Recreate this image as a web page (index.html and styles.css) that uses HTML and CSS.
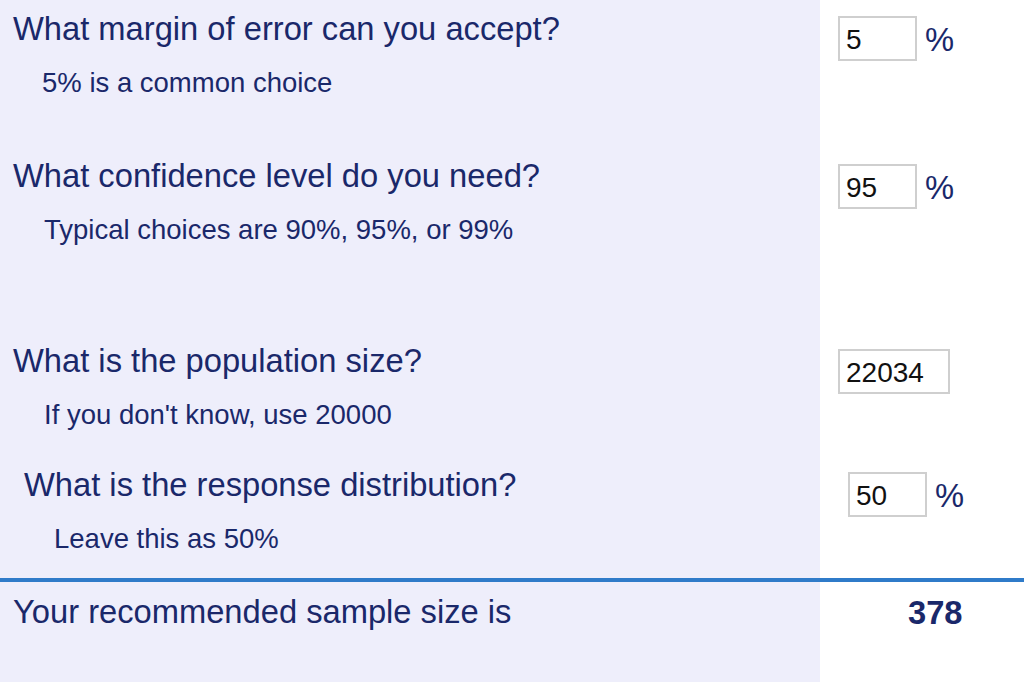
FILE: index.html
```html
<!DOCTYPE html>
<html lang="en">
<head>
    <meta charset="UTF-8">
    <title>Sample Size Calculator</title>
    <link rel="stylesheet" href="styles.css">
</head>
<body>

<div class="calc">
    <div class="row r1">
        <div class="q">
            <h2>What margin of error can you accept?</h2>
            <p class="hint">5% is a common choice</p>
        </div>
        <div class="a">
            <input type="text" value="5"><span class="pct">%</span>
        </div>
    </div>

    <div class="row r2">
        <div class="q">
            <h2>What confidence level do you need?</h2>
            <p class="hint wide">Typical choices are 90%, 95%, or 99%</p>
        </div>
        <div class="a">
            <input type="text" value="95"><span class="pct">%</span>
        </div>
    </div>

    <div class="row r3">
        <div class="q">
            <h2>What is the population size?</h2>
            <p class="hint wide">If you don't know, use 20000</p>
        </div>
        <div class="a">
            <input type="text" class="big" value="22034">
        </div>
    </div>

    <div class="row r4 shifted">
        <div class="q">
            <h2>What is the response distribution?</h2>
            <p class="hint">Leave this as 50%</p>
        </div>
        <div class="a">
            <input type="text" value="50"><span class="pct">%</span>
        </div>
    </div>

    <div class="rule"></div>

    <div class="row result">
        <div class="q">
            <h2>Your recommended sample size is</h2>
        </div>
        <div class="a">
            <span class="answer">378</span>
        </div>
    </div>
</div>

</body>
</html>
```

FILE: styles.css
```css
body {
    margin: 0;
    background: #ffffff;
    font-family: 'Liberation Sans', Arial, sans-serif;
    color: #1a286a;
    overflow: hidden;
}

.calc {
    width: 1024px;
    height: 682px;
    display: flex;
    flex-direction: column;
}

.row {
    display: flex;
}

.q {
    width: 820px;
    background: #eeeefb;
    padding: 11px 0 0 13px;
    box-sizing: border-box;
}

.a {
    flex: 1;
    display: flex;
    align-items: flex-start;
    padding: 16px 0 0 18px;
}

.r1 { height: 147px; }
.r2 { height: 185px; }
.r3 { height: 124px; }
.r4 { height: 122px; }

.r2 .a, .r3 .a { padding-top: 17px; }

.shifted .q {
    padding-left: 24px;
}

.shifted .a {
    padding-left: 28px;
}

h2 {
    margin: 0;
    font-size: 32.7px;
    font-weight: normal;
    line-height: 36px;
}

.hint {
    margin: 20px 0 0 29px;
    font-size: 27.5px;
    line-height: 32px;
}

.hint.wide {
    margin-left: 31px;
}

.shifted .hint {
    margin-left: 30px;
}

input {
    width: 79px;
    height: 45px;
    box-sizing: border-box;
    border: 2px solid #cfcfcf;
    padding: 3px 0 0 6px;
    font-family: 'Liberation Sans', Arial, sans-serif;
    font-size: 28px;
    color: #111;
    background: #fff;
    outline: none;
}

input.big {
    width: 112px;
}

.pct {
    margin: 6px 0 0 8px;
    font-size: 32.7px;
    line-height: 36px;
}

.rule {
    height: 4px;
    background: #2f7bc9;
}

.result {
    flex: 1;
}

.result .q {
    padding-top: 12px;
}

.result .a {
    padding: 13px 0 0 88px;
}

.answer {
    font-size: 32.7px;
    font-weight: bold;
    line-height: 36px;
}
```
